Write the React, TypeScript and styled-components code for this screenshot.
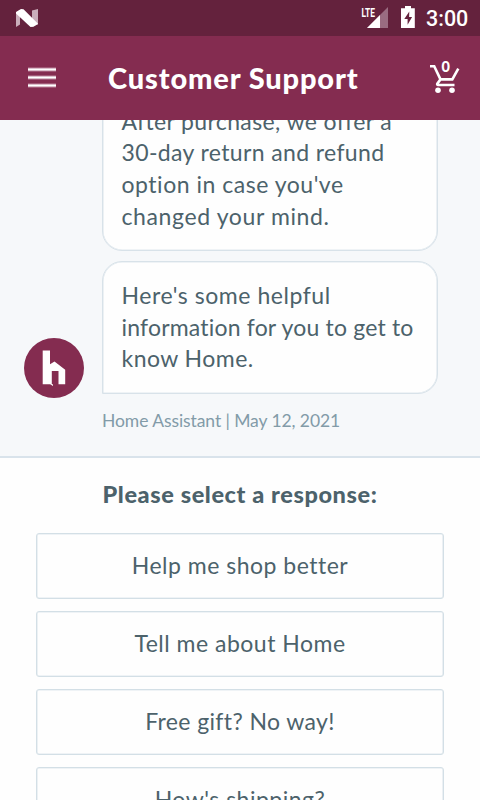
import React from "react";
import styled, { createGlobalStyle } from "styled-components";

const GlobalStyle = createGlobalStyle`
  * { box-sizing: border-box; }
  body { margin: 0; overflow: hidden; background: #fefefe; }
  button { font: inherit; }
`;

const Screen = styled.div`
  width: 480px;
  height: 800px;
  display: flex;
  flex-direction: column;
  overflow: hidden;
  font-family: Lato, sans-serif;
  color: #4c626b;
  background: #fefefe;
`;

const StatusBar = styled.div`
  height: 36px;
  flex: none;
  display: flex;
  justify-content: space-between;
  align-items: flex-start;
  padding: 0 11px 0 14px;
  background: #64223d;
`;

const StatusIcons = styled.div`
  display: flex;
  gap: 11px;
  height: 36px;
`;

const Clock = styled.span`
  width: 43px;
  margin-left: -1px;
  font: 500 21.5px/38px Roboto, sans-serif;
  color: #fff;
  white-space: nowrap;
`;

const Header = styled.header`
  height: 84px;
  flex: none;
  display: flex;
  align-items: center;
  padding: 0 17px 0 28px;
  background: #842c50;
`;

const IconButton = styled.button`
  display: flex;
  padding: 0;
  border: 0;
  background: none;
  color: #fff;
`;

const Title = styled.h1`
  flex: 1;
  margin: 0 0 0 52px;
  font-size: 29px;
  font-weight: 900;
  line-height: 84px;
  letter-spacing: 0.85px;
  color: #fff;
  white-space: nowrap;
`;

const Chat = styled.section`
  height: 338px;
  flex: none;
  display: flex;
  flex-direction: column;
  justify-content: flex-end;
  overflow: hidden;
  padding: 0 42px 22px 24px;
  background: #f6f8fa;
  border-bottom: 2px solid #d9e3eb;
`;

const MessageRow = styled.div`
  display: grid;
  grid-template-columns: 60px 336px;
  column-gap: 18px;
  align-items: end;
`;

const Avatar = styled.div`
  width: 60px;
  height: 60px;
  margin-bottom: 36px;
`;

const Messages = styled.div`
  grid-column: 2;
  display: flex;
  flex-direction: column;
`;

const Bubble = styled.div<{ $last?: boolean }>`
  padding: 18px 18px 18px 18.5px;
  border: 1px solid #d8e2e9;
  border-radius: ${(p) => (p.$last ? "20px 20px 20px 0" : "20px")};
  background: #fefefe;
  box-shadow: inset 0 0 0 0.6px #dfe7ed;

  & + & {
    margin-top: 10px;
  }
`;

const Line = styled.span<{ $tracking: number }>`
  display: block;
  font-size: 23px;
  line-height: 31.6px;
  letter-spacing: ${(p) => p.$tracking}px;
  white-space: nowrap;
`;

const Meta = styled.div`
  height: 40px;
  font-size: 17.5px;
  line-height: 54px;
  letter-spacing: -0.08px;
  color: #829ba8;
  white-space: nowrap;
`;

const Responses = styled.section`
  display: flex;
  flex-direction: column;
  gap: 12px;
  padding: 0 36px;
`;

const Prompt = styled.h2`
  height: 63px;
  margin: 0;
  font-size: 23.5px;
  font-weight: 900;
  line-height: 73px;
  letter-spacing: 0.6px;
  text-align: center;
  white-space: nowrap;
`;

const Choice = styled.button<{ $tracking: number }>`
  height: 66px;
  flex: none;
  padding: 0 0 2px;
  border: 1px solid #d3dfe6;
  border-radius: 3px;
  box-shadow: inset 0 0 0 0.6px #dfe7ed;
  background: #fefefe;
  color: #4c626b;
  font-size: 23px;
  line-height: 62px;
  letter-spacing: ${(p) => p.$tracking}px;
  white-space: nowrap;
`;

type TextLine = { text: string; tracking: number };

const messages: TextLine[][] = [
  [
    { text: "After purchase, we offer a", tracking: 0.38 },
    { text: "30-day return and refund", tracking: 0.37 },
    { text: "option in case you've", tracking: 0.52 },
    { text: "changed your mind.", tracking: 0.62 },
  ],
  [
    { text: "Here's some helpful", tracking: 0.55 },
    { text: "information for you to get to", tracking: 0.19 },
    { text: "know Home.", tracking: 0.45 },
  ],
];

const choices: TextLine[] = [
  { text: "Help me shop better", tracking: 0.5 },
  { text: "Tell me about Home", tracking: 0.5 },
  { text: "Free gift? No way!", tracking: 0.38 },
  { text: "How's shipping?", tracking: 0.5 },
];

const NougatIcon = () => (
  <svg width="26" height="36" viewBox="14 0 26 36">
    <path d="M16 12.5 20 10v14.500L16 27z" fill="#c9aebb" />
    <path d="M32 10.500 38 9v15.500l-6 2z" fill="#c9aebb" />
    <path d="M16 12 21 9.100l2.500.2L38 23.800 33.500 26.800l-3 .2L16 13.500z" fill="#fff" />
  </svg>
);

const SignalIcon = () => (
  <svg width="28" height="36" viewBox="361 0 28 36">
    <path d="M388 7v21h-21z" fill="#9a6c81" />
    <path d="M380 15v13h-13z" fill="#fff" />
    <path d="M361 6h14v8l-4 4h-10z" fill="#64223d" />
    <text
      x="361.500"
      y="16.500"
      textLength="13.500"
      lengthAdjust="spacingAndGlyphs"
      fill="#fff"
      fontFamily="Roboto, sans-serif"
      fontWeight="700"
      fontSize="13"
    >
      LTE
    </text>
  </svg>
);

const BatteryIcon = () => (
  <svg width="16" height="36" viewBox="400 0 16 36">
    <path d="M405 6h6v2.200h3.800V28H401V8.200h4z" fill="#fff" />
    <path d="m409.300 11.500-5 7.500h3.300v5.800l4.500-7.800h-3z" fill="#64223d" />
  </svg>
);

const MenuIcon = () => (
  <svg width="28" height="22" viewBox="28 67 28 22">
    <path d="M28 69.500h28M28 77.500h28M28 85.500h28" stroke="#b98199" strokeWidth="4" />
    <path d="M28 69.500h28M28 77.500h28M28 85.500h28" stroke="#fff" strokeWidth="2.200" />
  </svg>
);

const CartIcon = () => (
  <svg width="34" height="36" viewBox="429 59 34 36" fill="none">
    <path
      d="M430 65.200h4.200l6.300 13.200h11.800l6-10.800M440.500 78.400l-3.200 4.300c-.4.800 0 1.300.8 1.300H454.500"
      stroke="#fff"
      strokeWidth="2.600"
    />
    <circle cx="438" cy="89.200" r="2.800" fill="#fff" />
    <circle cx="452" cy="89.200" r="2.800" fill="#fff" />
    <text x="445.700" y="71" textAnchor="middle" fill="#fff" fontFamily="Lato, sans-serif" fontWeight="900" fontSize="14.500">
      0
    </text>
  </svg>
);

const HomeLogo = () => (
  <svg width="60" height="60" viewBox="24 338 60 60">
    <circle cx="54" cy="368" r="30" fill="#842c50" />
    <path
      d="M42.700 350.500h7.300V364.300l4.500-2.800 10.700 8.300v14.400h-6.700V371h-6.700v13.200h1.200v1.800l-2.800-1.800h-7.500z"
      fill="#fefefe"
    />
  </svg>
);

export default function App() {
  return (
    <>
      <GlobalStyle />
      <Screen>
        <StatusBar>
          <NougatIcon />
          <StatusIcons>
            <SignalIcon />
            <BatteryIcon />
            <Clock>3:00</Clock>
          </StatusIcons>
        </StatusBar>
        <Header>
          <IconButton aria-label="Menu">
            <MenuIcon />
          </IconButton>
          <Title>Customer Support</Title>
          <IconButton aria-label="Cart">
            <CartIcon />
          </IconButton>
        </Header>
        <Chat>
          <MessageRow>
            <Avatar>
              <HomeLogo />
            </Avatar>
            <Messages>
              {messages.map((lines, i) => (
                <Bubble key={i} $last={i === messages.length - 1}>
                  {lines.map((line) => (
                    <Line key={line.text} $tracking={line.tracking}>
                      {line.text}
                    </Line>
                  ))}
                </Bubble>
              ))}
              <Meta>Home Assistant | May 12, 2021</Meta>
            </Messages>
          </MessageRow>
        </Chat>
        <Responses>
          <Prompt>Please select a response:</Prompt>
          {choices.map((choice) => (
            <Choice key={choice.text} $tracking={choice.tracking}>
              {choice.text}
            </Choice>
          ))}
        </Responses>
      </Screen>
    </>
  );
}
